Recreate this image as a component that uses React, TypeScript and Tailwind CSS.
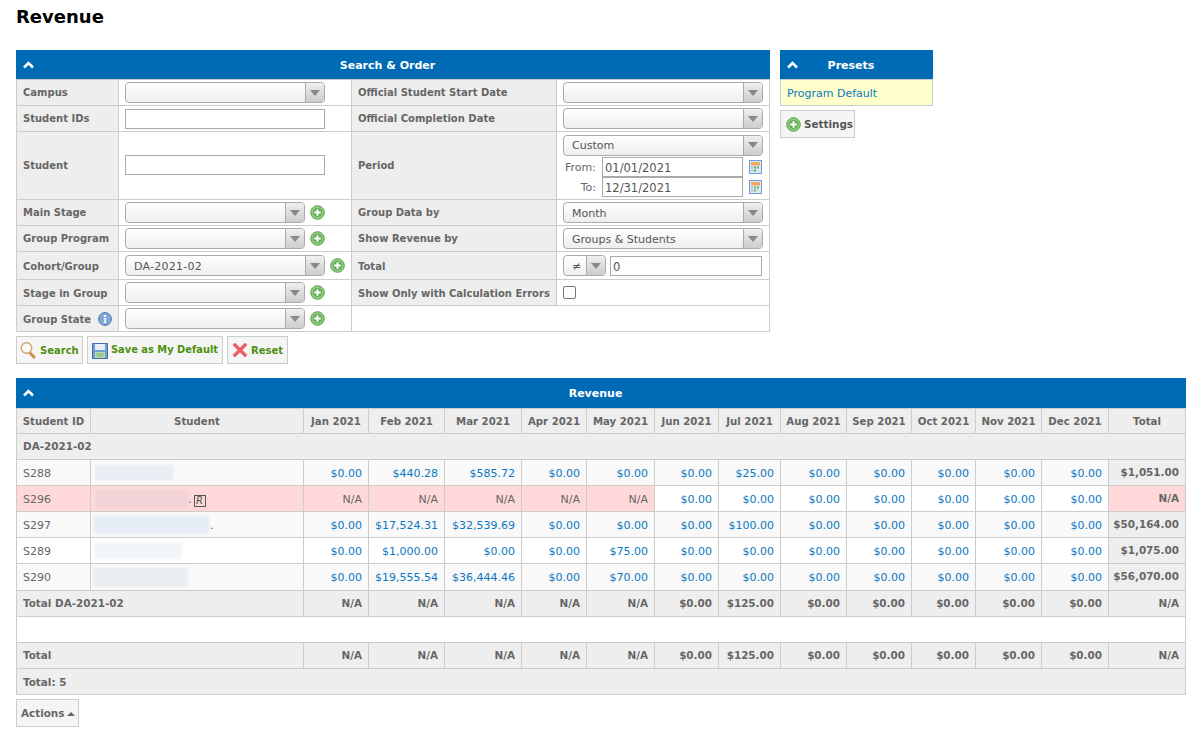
import type { ReactNode } from 'react';

const Z = '$0.00';
const RESULT_ROWS = [
  { id: 'S288', blur: 'w-[78px] h-[15px] ml-[4px] bg-[#e9eef4]', zebra: true, vals: [Z, '$440.28', '$585.72', Z, Z, Z, '$25.00', Z, Z, Z, Z, Z], total: '$1,051.00' },
  { id: 'S296', blur: 'w-[93px] h-[18px] ml-[4px] bg-[#f1d3d8]', zebra: false, error: true, vals: ['N/A', 'N/A', 'N/A', 'N/A', 'N/A', Z, Z, Z, Z, Z, Z, Z], total: 'N/A' },
  { id: 'S297', blur: 'w-[115px] h-[18px] ml-[3px] bg-[#e5ecf4]', zebra: true, dot: true, vals: [Z, '$17,524.31', '$32,539.69', Z, Z, Z, '$100.00', Z, Z, Z, Z, Z], total: '$50,164.00' },
  { id: 'S289', blur: 'w-[88px] h-[16px] ml-[3px] bg-[#f2f6fb]', zebra: false, vals: [Z, '$1,000.00', Z, Z, '$75.00', Z, Z, Z, Z, Z, Z, Z], total: '$1,075.00' },
  { id: 'S290', blur: 'w-[95px] h-[19px] ml-[2px] bg-[#eaeef3]', zebra: true, tall: true, vals: [Z, '$19,555.54', '$36,444.46', Z, '$70.00', Z, Z, Z, Z, Z, Z, Z], total: '$56,070.00' },
];
const MONTHS = ['Jan 2021', 'Feb 2021', 'Mar 2021', 'Apr 2021', 'May 2021', 'Jun 2021', 'Jul 2021', 'Aug 2021', 'Sep 2021', 'Oct 2021', 'Nov 2021', 'Dec 2021'];
const TOTALS = ['N/A', 'N/A', 'N/A', 'N/A', 'N/A', Z, '$125.00', Z, Z, Z, Z, Z, 'N/A'];

function ChevronUp() {
  return (
    <svg width="11" height="8" viewBox="0 0 11 8" className="block">
      <path d="M1 6.5 L5.5 2 L10 6.5" fill="none" stroke="#fff" strokeWidth="2.6" />
    </svg>
  );
}

function PlusIcon() {
  return (
    <svg width="15" height="15" viewBox="0 0 15 15" className="block shrink-0">
      <circle cx="7.5" cy="7.5" r="6.8" fill="#8fcb80" stroke="#5aa34c" strokeWidth="1" />
      <circle cx="7.5" cy="7.5" r="4.6" fill="#63ad56" />
      <path d="M7.5 4.2v6.6M4.2 7.5h6.6" stroke="#fff" strokeWidth="2" />
    </svg>
  );
}

function InfoIcon() {
  return (
    <svg width="14" height="14" viewBox="0 0 14 14" className="block shrink-0">
      <circle cx="7" cy="7" r="6.4" fill="#7ea8d8" stroke="#4a76ad" strokeWidth="1" />
      <circle cx="7" cy="3.9" r="1.2" fill="#fff" />
      <path d="M5.8 6h2v4.2h.8v.9H5.4v-.9h.9V6.9h-.5z" fill="#fff" />
    </svg>
  );
}

function CalendarIcon() {
  return (
    <svg width="13" height="14" viewBox="0 0 13 14" className="block shrink-0">
      <rect x="0.5" y="0.5" width="12" height="13" fill="#dfe9f6" stroke="#6d9bd6" />
      <rect x="2" y="2" width="9" height="3.5" fill="#f7a55e" />
      <rect x="2" y="6.5" width="2" height="2" fill="#a3bcd8" />
      <rect x="5" y="6.5" width="2" height="2" fill="#5fb05e" />
      <rect x="8" y="6.5" width="2" height="2" fill="#5fb05e" />
      <rect x="2" y="9.5" width="2" height="2" fill="#a3bcd8" />
      <rect x="5" y="9.5" width="2" height="2" fill="#5fb05e" />
      <rect x="8" y="9.5" width="2" height="2" fill="#d3dde8" />
    </svg>
  );
}

function SearchIcon() {
  return (
    <svg width="16" height="18" viewBox="0 0 16 18" className="block shrink-0">
      <path d="M9.5 11.5 L14 16" stroke="#c98f4a" strokeWidth="3" strokeLinecap="round" />
      <circle cx="6.5" cy="7" r="5.3" fill="#fbfaf2" stroke="#c9a878" strokeWidth="1.4" />
    </svg>
  );
}

function SaveIcon() {
  return (
    <svg width="16" height="16" viewBox="0 0 16 16" className="block shrink-0">
      <path d="M0.5 0.5h15v15h-15z" fill="#6f9fd6" stroke="#3f70ad" />
      <rect x="3" y="1" width="10" height="6" fill="#e6eef8" />
      <rect x="3" y="9" width="10" height="6" fill="#b7dcaa" />
      <path d="M4.5 11h7M4.5 13h7" stroke="#7ab06c" />
    </svg>
  );
}

function ResetIcon() {
  return (
    <svg width="14" height="14" viewBox="0 0 14 14" className="block shrink-0">
      <path d="M2 2 L12 12 M12 2 L2 12" stroke="#ee5f63" strokeWidth="3.4" strokeLinecap="square" />
    </svg>
  );
}

function Caret() {
  return <span className="h-0 w-0 border-x-[5px] border-t-[6px] border-x-transparent border-t-[#888]" />;
}

function Select({ value, className }: { value?: ReactNode; className: string }) {
  return (
    <div className={`flex h-[21px] items-stretch rounded-[4px] border border-[#aaa] bg-gradient-to-b from-white to-[#eee] ${className}`}>
      <span className="flex-1 pl-[8px] leading-[21px] text-[#555]">{value}</span>
      <span className="flex w-[19px] items-center justify-center rounded-r-[3px] border-l border-[#aaa] bg-gradient-to-b from-[#f0f0f0] to-[#ccc]">
        <Caret />
      </span>
    </div>
  );
}

function SmallSelect() {
  return (
    <div className="flex items-center gap-[5px]">
      <Select className="w-[180px]" />
      <PlusIcon />
    </div>
  );
}

function TextInput({ className, value }: { className: string; value?: string }) {
  return (
    <div className={`h-[20px] border border-[#aaa] bg-white pl-[2px] text-[11.5px] leading-[21px] text-[#555] ${className}`}>{value}</div>
  );
}

function Label({ children, low }: { children: ReactNode; low?: boolean }) {
  return (
    <td className={`whitespace-nowrap border border-[#ccc] bg-[#eee] pl-[6px] text-[10px] font-bold text-[#666] ${low ? 'pt-[1px]' : ''}`}>
      {children}
    </td>
  );
}

function Field({ children }: { children?: ReactNode }) {
  return <td className="border border-[#ccc] bg-white pl-[6px]">{children}</td>;
}

function PanelHeader({ title, className }: { title: string; className: string }) {
  return (
    <div className={`relative flex items-center justify-center bg-[#006bb5] pr-[11px] font-bold text-white ${className}`}>
      <span className="absolute left-[7px] top-[11px]">
        <ChevronUp />
      </span>
      {title}
    </div>
  );
}

function Button({ icon, label, className }: { icon: ReactNode; label: string; className: string }) {
  return (
    <div className={`flex h-[28px] items-center whitespace-nowrap border border-[#ccc] bg-[#f5f5f5] font-bold ${className}`}>
      {icon}
      {label}
    </div>
  );
}

function SearchTable() {
  return (
    <table className="w-[753px] table-fixed border-collapse">
      <colgroup>
        <col className="w-[102px]" />
        <col className="w-[233px]" />
        <col className="w-[205px]" />
        <col className="w-[213px]" />
      </colgroup>
      <tbody>
        <tr className="h-[26px]">
          <Label>Campus</Label>
          <Field><Select className="w-[200px]" /></Field>
          <Label>Official Student Start Date</Label>
          <Field><Select className="w-[200px]" /></Field>
        </tr>
        <tr className="h-[26px]">
          <Label>Student IDs</Label>
          <Field><TextInput className="w-[200px]" /></Field>
          <Label>Official Completion Date</Label>
          <Field><Select className="w-[200px]" /></Field>
        </tr>
        <tr className="h-[68px]">
          <Label>Student</Label>
          <Field><TextInput className="-mt-[2px] w-[200px]" /></Field>
          <Label>Period</Label>
          <Field>
            <Select className="w-[200px]" value={<span className="-mt-[1px] block">Custom</span>} />
            <div className="mt-[1px] flex items-center text-[#666]">
              <span className="w-[33px] pt-[3px] text-right">From:</span>
              <TextInput className="ml-[6px] w-[141px]" value="01/01/2021" />
              <span className="ml-[6px]"><CalendarIcon /></span>
            </div>
            <div className="flex items-center text-[#666]">
              <span className="w-[33px] pt-[3px] text-right">To:</span>
              <TextInput className="ml-[6px] w-[141px]" value="12/31/2021" />
              <span className="ml-[6px]"><CalendarIcon /></span>
            </div>
          </Field>
        </tr>
        <tr className="h-[26px]">
          <Label>Main Stage</Label>
          <Field><SmallSelect /></Field>
          <Label>Group Data by</Label>
          <Field><Select className="w-[200px]" value="Month" /></Field>
        </tr>
        <tr className="h-[26px]">
          <Label>Group Program</Label>
          <Field><SmallSelect /></Field>
          <Label>Show Revenue by</Label>
          <Field><Select className="w-[200px]" value="Groups &amp; Students" /></Field>
        </tr>
        <tr className="h-[28px]">
          <Label low>Cohort/Group</Label>
          <Field>
            <div className="flex items-center gap-[5px]">
              <Select className="w-[200px]" value={<span className="tracking-[0.25px]">DA-2021-02</span>} />
              <PlusIcon />
            </div>
          </Field>
          <Label low>Total</Label>
          <Field>
            <div className="flex items-center gap-[4px]">
              <Select className="w-[43px]" value="≠" />
              <TextInput className="w-[152px]" value="0" />
            </div>
          </Field>
        </tr>
        <tr className="h-[26px]">
          <Label low>Stage in Group</Label>
          <Field><SmallSelect /></Field>
          <Label low>Show Only with Calculation Errors</Label>
          <Field><div className="h-[13px] w-[13px] rounded-[2px] border border-[#767676] bg-white" /></Field>
        </tr>
        <tr className="h-[26px]">
          <Label low>
            <span className="flex items-center gap-[7px]">Group State <InfoIcon /></span>
          </Label>
          <Field><SmallSelect /></Field>
          <td colSpan={2} className="border border-[#ccc] bg-white" />
        </tr>
      </tbody>
    </table>
  );
}

function ResultCell({ value, tone, tall }: { value: string; tone: 'link' | 'pink' | 'bold' | 'boldPink'; tall?: boolean }) {
  const styles = {
    link: 'text-[#0a78c2]',
    pink: 'bg-[#ffd9d9] text-[#666]',
    bold: 'bg-[#eee] text-[10.4px] font-bold text-[#666]',
    boldPink: 'bg-[#ffd9d9] text-[10.4px] font-bold text-[#666]',
  };
  const offset = tone === 'link' || tone === 'pink' ? (tall ? 'pt-[3px]' : 'pt-[4px]') : '';
  return <td className={`border border-[#ccc] pr-[6px] text-right ${offset} ${styles[tone]}`}>{value}</td>;
}

function ResultsTable() {
  return (
    <table className="w-[1169px] table-fixed border-collapse">
      <colgroup>
        <col className="w-[74px]" />
        <col className="w-[213px]" />
        <col className="w-[65px]" />
        <col className="w-[76px]" />
        <col className="w-[77px]" />
        <col className="w-[65px]" />
        <col className="w-[68px]" />
        <col className="w-[64px]" />
        <col className="w-[62px]" />
        <col className="w-[66px]" />
        <col className="w-[65px]" />
        <col className="w-[64px]" />
        <col className="w-[66px]" />
        <col className="w-[67px]" />
        <col className="w-[77px]" />
      </colgroup>
      <thead>
        <tr className="h-[25px] bg-[#eee] text-[10.2px] font-bold text-[#666]">
          <th className="border border-[#ccc] pt-[1px] font-bold">Student ID</th>
          <th className="border border-[#ccc] pt-[1px] font-bold">Student</th>
          {MONTHS.map((m) => (
            <th key={m} className="border border-[#ccc] pt-[1px] font-bold">{m}</th>
          ))}
          <th className="border border-[#ccc] pt-[1px] font-bold">Total</th>
        </tr>
      </thead>
      <tbody>
        <tr className="h-[26px] bg-[#eee] text-[10.4px] font-bold text-[#666]">
          <td colSpan={15} className="border border-[#ccc] pl-[6px]">DA-2021-02</td>
        </tr>
        {RESULT_ROWS.map((row) => (
          <tr key={row.id} className={`${row.tall ? 'h-[27px]' : 'h-[26px]'} ${row.zebra ? 'bg-[#f9f9f9]' : 'bg-white'}`}>
            <td className={`border border-[#ccc] pl-[6px] text-[#666] ${row.tall ? 'pt-[3px]' : 'pt-[4px]'} ${row.error ? 'bg-[#ffd9d9]' : ''}`}>{row.id}</td>
            <td className={`border border-[#ccc] ${row.error ? 'bg-[#ffd9d9]' : ''}`}>
              <div className="flex items-center">
                <div className={`blur-[1px] ${row.blur}`} />
                {row.error && <span className="mt-[4px] text-[#0a78c2]">.</span>}
                {row.error && (
                  <span className="ml-[2px] mt-[4px] flex h-[12px] w-[12px] items-center justify-center border border-[#555] text-[10px] italic leading-none text-[#555]">R</span>
                )}
                {row.dot && <span className="ml-[1px] mt-[4px] text-[#0a78c2]">.</span>}
              </div>
            </td>
            {row.vals.map((v, i) => (
              <ResultCell key={i} value={v} tone={v === 'N/A' ? 'pink' : 'link'} tall={row.tall} />
            ))}
            <ResultCell value={row.total} tone={row.error ? 'boldPink' : 'bold'} />
          </tr>
        ))}
        <tr className="h-[26px] bg-[#eee] text-[10.4px] font-bold text-[#666]">
          <td colSpan={2} className="border border-[#ccc] pl-[6px]">Total DA-2021-02</td>
          {TOTALS.map((v, i) => (
            <td key={i} className="border border-[#ccc] pr-[6px] text-right">{v}</td>
          ))}
        </tr>
        <tr className="h-[26px] bg-white">
          <td colSpan={15} className="border border-[#ccc]" />
        </tr>
        <tr className="h-[26px] bg-[#eee] text-[10.4px] font-bold text-[#666]">
          <td colSpan={2} className="border border-[#ccc] pl-[6px]">Total</td>
          {TOTALS.map((v, i) => (
            <td key={i} className="border border-[#ccc] pr-[6px] text-right">{v}</td>
          ))}
        </tr>
        <tr className="h-[26px] bg-[#eee] text-[10.4px] font-bold text-[#666]">
          <td colSpan={15} className="border border-[#ccc] pl-[6px] pt-[2px]">Total: 5</td>
        </tr>
      </tbody>
    </table>
  );
}

export default function App() {
  return (
    <div className="h-[731px] overflow-hidden bg-white pl-[16px] pr-[5px] font-['DejaVu_Sans',sans-serif] text-[11px]">
      <h1 className="h-[50px] pt-[6px] text-[18px] font-bold leading-[22px] text-black">Revenue</h1>

      <div className="flex items-start gap-[10px]">
        <div className="w-[754px]">
          <PanelHeader title="Search & Order" className="h-[29px] pt-[4px]" />
          <SearchTable />
          <div className="mt-[4px] flex gap-[4px] text-[#4f8f10]">
            <Button icon={<SearchIcon />} label="Search" className="w-[67px] gap-[4px] pl-[3px] text-[10px]" />
            <Button icon={<SaveIcon />} label="Save as My Default" className="w-[136px] gap-[3px] pl-[4px] pt-[1px] text-[9.9px]" />
            <Button icon={<ResetIcon />} label="Reset" className="w-[61px] gap-[4px] pl-[5px] text-[10px]" />
          </div>
        </div>

        <div className="w-[153px]">
          <PanelHeader title="Presets" className="h-[29px] pt-[4px]" />
          <div className="flex h-[27px] items-center border border-[#ccc] bg-[#ffffcc] pl-[6px] pt-[3px] text-[#0a78c2]">Program Default</div>
          <div className="mt-[4px]">
            <Button icon={<PlusIcon />} label="Settings" className="w-[75px] gap-[3px] pl-[5px] pt-[1px] text-[10.4px] text-[#555]" />
          </div>
        </div>
      </div>

      <div className="mt-[14px] w-[1170px]">
        <PanelHeader title="Revenue" className="h-[30px] pt-[2px]" />
        <ResultsTable />
      </div>

      <div className="mt-[4px] flex h-[28px] w-[63px] items-center gap-[3px] border border-[#ccc] bg-[#f5f5f5] pl-[4px] pt-[1px] text-[10.4px] font-bold text-[#666]">
        Actions
        <span className="h-0 w-0 border-x-[4px] border-b-[4px] border-x-transparent border-b-[#666]" />
      </div>
    </div>
  );
}
